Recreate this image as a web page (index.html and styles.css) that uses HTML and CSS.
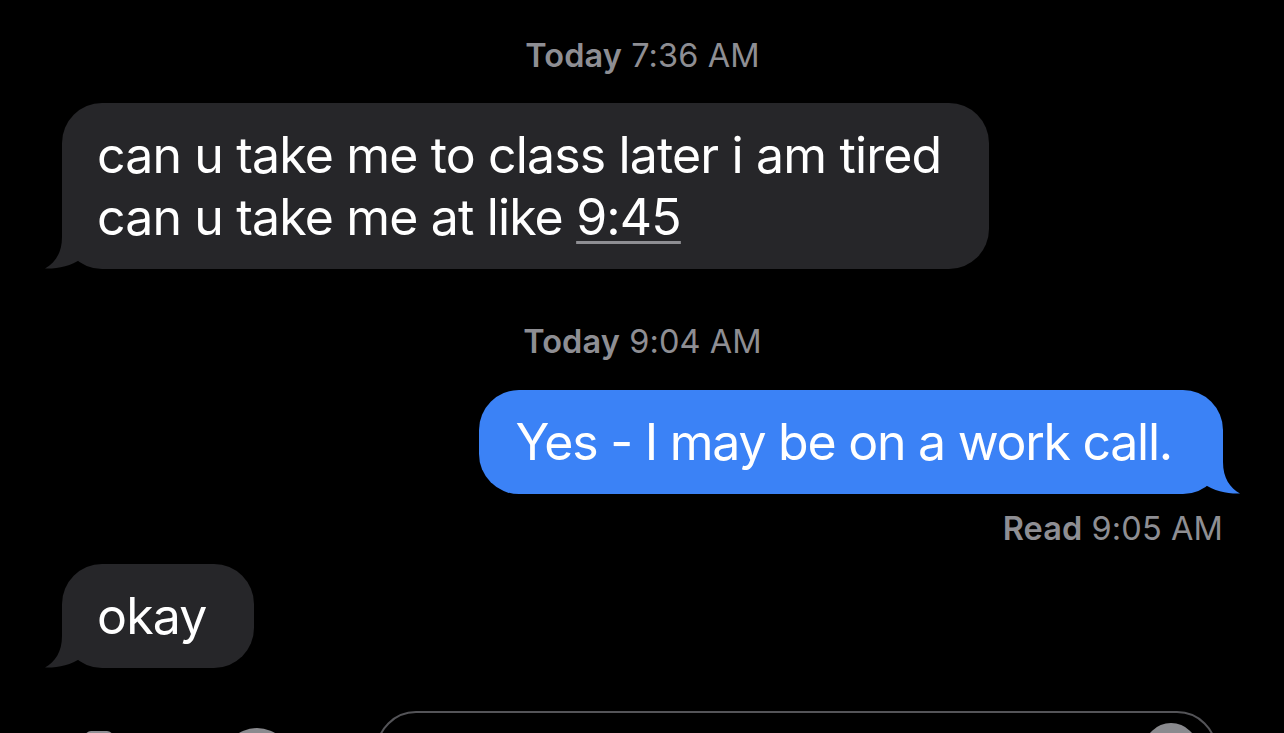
FILE: index.html
```html
<!DOCTYPE html>
<html lang="en">
<head>
<meta charset="utf-8">
<title>Messages</title>
<link rel="stylesheet" href="styles.css">
</head>
<body>
<main class="thread">
  <div class="stamp stamp-first"><b>Today</b> 7:36 AM</div>

  <div class="bubble them">
    <span class="text">can u take me to class later i am tired<br>can u take me at like <u class="link">9:45</u></span>
    <svg class="tail tail-left" viewBox="0 0 50 46" width="50" height="46" aria-hidden="true"><path d="M17 0 L17 14 C17 30 10 40 0 45.5 C12 46 26 43 36 36 L50 36 L50 0 Z"/></svg>
  </div>

  <div class="stamp stamp-second"><b>Today</b> 9:04 AM</div>

  <div class="bubble me">
    <span class="text">Yes - I may be on a work call.</span>
    <svg class="tail tail-right" viewBox="0 0 50 46" width="50" height="46" aria-hidden="true"><path d="M17 0 L17 14 C17 30 10 40 0 45.5 C12 46 26 43 36 36 L50 36 L50 0 Z"/></svg>
  </div>

  <div class="receipt"><b>Read</b> 9:05 AM</div>

  <div class="bubble them">
    <span class="text">okay</span>
    <svg class="tail tail-left" viewBox="0 0 50 46" width="50" height="46" aria-hidden="true"><path d="M17 0 L17 14 C17 30 10 40 0 45.5 C12 46 26 43 36 36 L50 36 L50 0 Z"/></svg>
  </div>

  <div class="composer">
    <div class="tools">
      <span class="tool camera"></span>
      <span class="tool apps"></span>
    </div>
    <div class="field">
      <span class="mic"></span>
    </div>
  </div>
</main>
</body>
</html>
```

FILE: styles.css
```css
html, body {
  margin: 0;
  padding: 0;
  background: #000;
  height: 733px;
  overflow: hidden;
}

body {
  font-family: Inter, "Noto Sans", "Liberation Sans", sans-serif;
  color: #fff;
}

.thread {
  display: flex;
  flex-direction: column;
  padding: 38px 61px 0 62px;
}

.stamp {
  align-self: center;
  font-size: 32.5px;
  line-height: 36px;
  color: #8e8e93;
  letter-spacing: 0.1px;
}

.stamp b, .receipt b {
  font-weight: 600;
}

.bubble {
  position: relative;
  font-size: 50px;
  letter-spacing: -0.85px;
  line-height: 62px;
  padding: 21px 48px 21px 35px;
  border-radius: 40px;
  margin-top: 30px;
}

.stamp-first + .bubble {
  margin-top: 29px;
}

.bubble .text {
  position: relative;
  z-index: 1;
}

.them {
  align-self: flex-start;
  background: #262629;
}

.them + .stamp { margin-top: 55px; }

.me {
  align-self: flex-end;
  background: #3b82f6;
  letter-spacing: -1.25px;
  padding-left: 37px;
  padding-right: 51px;
}

.link {
  text-decoration: underline;
  text-decoration-color: #8e8e93;
  text-decoration-thickness: 3px;
  text-underline-offset: 6px;
}

.tail {
  position: absolute;
  bottom: 0;
  z-index: 0;
}

.tail-left {
  left: -17px;
  fill: #262629;
}

.tail-right {
  right: -17px;
  fill: #3b82f6;
  transform: scaleX(-1);
}

.receipt {
  align-self: flex-end;
  margin-top: 17px;
  font-size: 32.5px;
  line-height: 36px;
  color: #8e8e93;
  letter-spacing: 0.1px;
}

.receipt + .bubble {
  margin-top: 17px;
}

.composer {
  display: flex;
  align-items: flex-start;
  margin-top: 43px;
  margin-left: -62px;
  margin-right: -61px;
  height: 22px;
  overflow: hidden;
}

.tools {
  width: 376px;
  flex: none;
  position: relative;
  height: 100%;
}

.tool {
  position: absolute;
  background: #8e8e93;
}

.camera {
  left: 85px;
  top: 20px;
  width: 28px;
  height: 20px;
  border-radius: 6px;
}

.apps {
  left: 222px;
  top: 17px;
  width: 70px;
  height: 70px;
  border-radius: 35px;
  background: #8a8a8e;
}

.field {
  flex: none;
  width: 841px;
  height: 96px;
  box-sizing: border-box;
  border: 2.5px solid #545458;
  border-radius: 40px;
  display: flex;
  justify-content: flex-end;
  padding: 9.5px 17.5px 0 0;
}

.mic {
  width: 54px;
  height: 54px;
  border-radius: 50%;
  background: #8a8a8e;
}
```
